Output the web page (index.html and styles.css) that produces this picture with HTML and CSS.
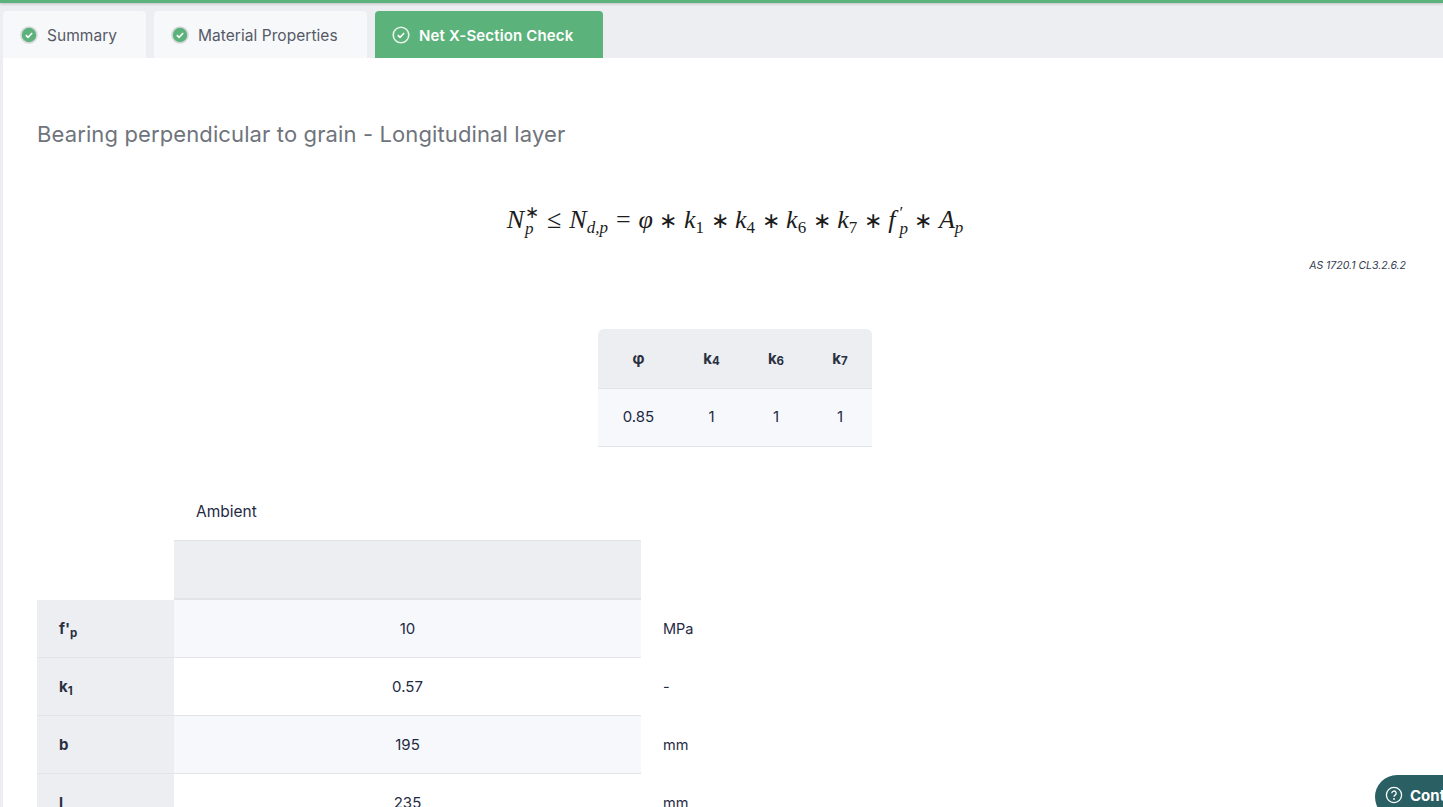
FILE: index.html
```html
<!DOCTYPE html>
<html lang="en">
<head>
<meta charset="utf-8">
<title>Net X-Section Check</title>
<link rel="stylesheet" href="styles.css">
</head>
<body>
<div class="topbar"></div>
<nav class="tabs">
  <div class="tab tab-sum"><svg class="chk" viewBox="0 0 18 18"><circle cx="9" cy="9" r="8" fill="#5bb27a" stroke="#d5d7da" stroke-width="1.6"/><path d="M5.8 9.2l2.2 2.1 4.2-4.3" fill="none" stroke="#fff" stroke-width="1.6"/></svg>Summary</div>
  <div class="tab tab-mat"><svg class="chk" viewBox="0 0 18 18"><circle cx="9" cy="9" r="8" fill="#5bb27a" stroke="#d5d7da" stroke-width="1.6"/><path d="M5.8 9.2l2.2 2.1 4.2-4.3" fill="none" stroke="#fff" stroke-width="1.6"/></svg>Material Properties</div>
  <div class="tab tab-active"><svg class="chk" viewBox="0 0 18 18"><circle cx="9" cy="9" r="7.8" fill="none" stroke="#e6f3ea" stroke-width="1.6"/><path d="M5.8 9.2l2.2 2.1 4.2-4.3" fill="none" stroke="#fff" stroke-width="1.6"/></svg>Net X-Section Check</div>
</nav>
<main class="content">
  <h2 class="title">Bearing perpendicular to grain - Longitudinal layer</h2>
  <div class="formula"><i>N</i><span class="stack"><span class="sup">∗</span><i>p</i></span><span class="op">≤</span><i>N</i><sub class="fsub"><i>d,p</i></sub><span class="op">=</span><i>φ</i><span class="bin">∗</span><i>k</i><sub class="fsub">1</sub><span class="bin">∗</span><i>k</i><sub class="fsub">4</sub><span class="bin">∗</span><i>k</i><sub class="fsub">6</sub><span class="bin">∗</span><i>k</i><sub class="fsub">7</sub><span class="bin">∗</span><i>f</i><span class="stack stack-f"><span class="sup">′</span><i>p</i></span><span class="bin">∗</span><i>A</i><sub class="fsub"><i>p</i></sub></div>
  <div class="ref">AS 1720.1 CL3.2.6.2</div>
  <div class="factors">
    <div class="fc fh">φ</div><div class="fc fh">k<sub>4</sub></div><div class="fc fh">k<sub>6</sub></div><div class="fc fh">k<sub>7</sub></div>
    <div class="fc fd">0.85</div><div class="fc fd">1</div><div class="fc fd">1</div><div class="fc fd">1</div>
  </div>
  <div class="results">
    <div class="blank"></div><div class="cap">Ambient</div><div class="blank"></div>
    <div class="blank"></div><div class="hd"></div><div class="blank"></div>
    <div class="lab">f'<sub>p</sub></div><div class="val alt">10</div><div class="unit">MPa</div>
    <div class="lab">k<sub>1</sub></div><div class="val">0.57</div><div class="unit">-</div>
    <div class="lab">b</div><div class="val alt">195</div><div class="unit">mm</div>
    <div class="lab">l</div><div class="val">235</div><div class="unit">mm</div>
  </div>
</main>
<div class="chat"><svg class="help" viewBox="0 0 18 18"><circle cx="9" cy="9" r="7.6" fill="none" stroke="#fff" stroke-width="1.3"/><path d="M6.8 7.2a2.2 2.2 0 1 1 3.3 1.9c-.7.4-1.1.8-1.1 1.6" fill="none" stroke="#fff" stroke-width="1.3"/><circle cx="9" cy="13" r=".9" fill="#fff"/></svg>Contact</div>
</body>
</html>
```
FILE: styles.css
```css
* { box-sizing: border-box; }
html, body { margin: 0; height: 807px; overflow: hidden; }
body {
  background: #eceef2;
  font-family: "Inter", "Liberation Sans", sans-serif;
  color: #1f2a44;
  position: relative;
}
.topbar { height: 3px; background: #5bb27a; box-shadow: 0 1px 3px rgba(0,0,0,.2); }
.tabs { display: flex; gap: 8px; padding: 8px 0 0 3px; height: 55px; }
.tab {
  height: 47px; display: flex; align-items: center; gap: 9px;
  padding: 1px 0 0 17px; background: #f7f8fa; border-radius: 4px 4px 0 0;
  font-size: 15.5px; letter-spacing: .05px; color: #555a66;
}
.tab-sum { width: 143px; }
.tab-mat { width: 213px; }
.tab-active { width: 228px; background: #5bb27a; color: #fff; font-weight: 600; font-size: 15px; letter-spacing: .15px; }
.chk { width: 18px; height: 18px; flex: none; }
.content { margin-left: 3px; height: 749px; background: #fff; padding: 0 34px; overflow: hidden; }
.title { margin: 0; padding-top: 62px; font-size: 22px; line-height: 29px; font-weight: 400; color: #6f747c; letter-spacing: .12px; }
.formula {
  margin-top: 53px; height: 58px; display: flex; justify-content: center; align-items: baseline;
  font-family: "Liberation Serif", serif; font-size: 26px; line-height: 36px; color: #1c1c1c; padding-left: 24px;
}
.formula sub { line-height: 0; }
.fsub { font-size: 17px; position: relative; top: 5px; vertical-align: baseline; }
.stack { display: inline-flex; flex-direction: column; font-size: 17px; line-height: 16px; margin-left: 1px; align-self: flex-start; padding-top: 3px; }
.stack-f { margin-left: 4px; }
.sup { display: block; height: 16px; }
.op { margin: 0 8px; }
.bin { margin: 0 6.5px; font-size: 22px; }
.ref { padding-right: 3px; text-align: right; font-size: 10.5px; font-style: italic; line-height: 12px; color: #333a4d; }
.factors { margin: 57px 0 0 561px; width: 274px; display: grid; grid-template-columns: 81px 65px 64px 64px; }
.fc { display: flex; align-items: center; justify-content: center; font-size: 15px; }
.fc sub { font-size: 11.5px; line-height: 0; position: relative; top: 2px; vertical-align: baseline; }
.fh { height: 60px; background: #eceef2; font-weight: 700; color: #2a3040; border-bottom: 1px solid #e2e4e8; }
.fh:first-child { border-top-left-radius: 6px; }
.fh:nth-child(4) { border-top-right-radius: 6px; }
.fd { height: 58px; padding-bottom: 2px; background: #f7f8fc; border-bottom: 1px solid #e2e4e8; color: #1f2a44; }
.results { margin-top: 35px; display: grid; grid-template-columns: 137px 467px 120px; grid-template-rows: 58px 60px repeat(4, 58px); }
.cap { display: flex; align-items: center; padding-left: 22px; font-size: 15.5px; }
.hd { background: #eceef2; border-top: 1px solid #e2e4e8; border-bottom: 2px solid #e2e4e8; }
.lab { display: flex; align-items: center; padding-left: 22px; background: #eceef2; font-weight: 700; font-size: 15px; color: #2a3040; border-bottom: 1px solid #e2e4e8; }
.lab sub { font-size: 11.5px; line-height: 0; position: relative; top: 4px; vertical-align: baseline; }
.val { display: flex; align-items: center; justify-content: center; font-size: 15px; border-bottom: 1px solid #e2e4e8; background: #fff; }
.val.alt { background: #f7f8fc; }
.unit { display: flex; align-items: center; padding: 0 0 2px 22px; font-size: 14.5px; }
.chat {
  position: absolute; left: 1375px; top: 775px; width: 110px; height: 44px; padding-left: 10px;
  background: #2a5f63; border-radius: 22px; color: #fff; font-weight: 700; font-size: 15px;
  display: flex; align-items: flex-start; padding-top: 11px; gap: 7px;
}
.help { width: 18px; height: 18px; flex: none; }
```
